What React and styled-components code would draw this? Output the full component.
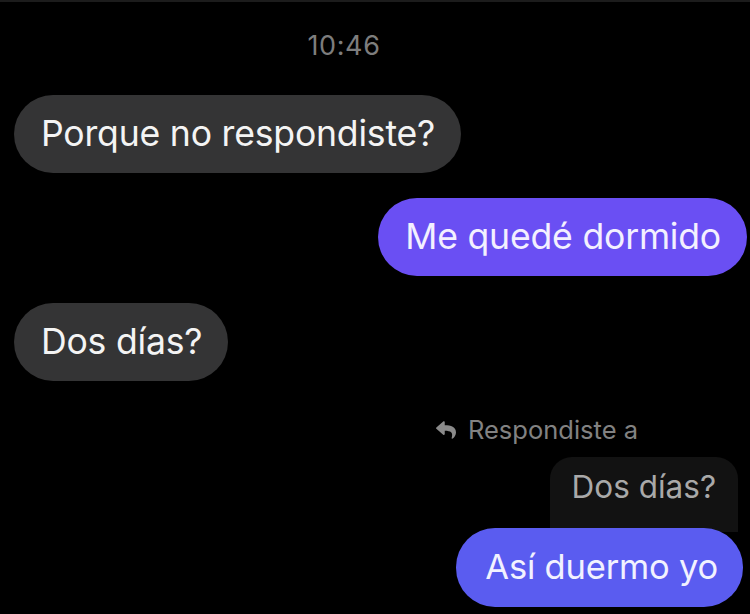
import React from "react";
import styled, { createGlobalStyle, css } from "styled-components";
import { FaReply } from "react-icons/fa";

const Global = createGlobalStyle`
  html, body {
    margin: 0;
    padding: 0;
    background: #000;
  }
  body {
    font-family: Inter, "Noto Sans", "Liberation Sans", sans-serif;
    -webkit-font-smoothing: antialiased;
  }
`;

const Screen = styled.div`
  width: 750px;
  height: 614px;
  background: #000;
  border-top: 2px solid #1c1c1c;
  box-sizing: border-box;
  overflow: hidden;
  display: flex;
  flex-direction: column;
  padding: 0 3px 0 14px;
`;

const TimeRow = styled.div`
  display: flex;
  justify-content: center;
  padding: 28px 73px 0 0;
  height: 63px;
  box-sizing: border-box;
  color: #7d7d7d;
  font-size: 27px;
  letter-spacing: 0.6px;
  line-height: 32px;
`;

const Row = styled.div`
  display: flex;
  justify-content: ${(p) => (p.$mine ? "flex-end" : "flex-start")};
  margin-top: ${(p) => p.$gap || 0}px;
`;

const Bubble = styled.div`
  height: 78px;
  box-sizing: border-box;
  display: flex;
  align-items: center;
  padding: 0 26px 2px 27px;
  border-radius: 39px;
  font-size: 35.6px;
  letter-spacing: -0.2px;
  white-space: nowrap;
  color: #f4f4f4;
  background: #343435;
  ${(p) =>
    p.$tone === "violet" &&
    css`
      background: #6a4ff3;
      color: #f3f0ff;
    `}
  ${(p) =>
    p.$tone === "blue" &&
    css`
      background: #5a5cf0;
      color: #f2f2ff;
    `}
`;

const ReplyGroup = styled.div`
  display: flex;
  flex-direction: column;
  align-items: flex-end;
  margin-top: 34px;
`;

const ReplyLabel = styled.div`
  display: flex;
  align-items: center;
  gap: 10px;
  align-self: flex-end;
  margin-right: 109px;
  color: #828282;
  font-size: 25.5px;
  line-height: 30px;
  svg {
    width: 24px;
    height: 20px;
    color: #8a8a8a;
  }
`;

const Quote = styled.div`
  margin-top: 12px;
  margin-right: 9px;
  height: 75px;
  box-sizing: border-box;
  padding: 12px 22px 0 22px;
  border-radius: 22px 22px 0 0;
  background: #121212;
  color: #a9a9a9;
  font-size: 31.5px;
  line-height: 36px;
  white-space: nowrap;
`;

const ReplyBubble = styled(Bubble)`
  position: relative;
  margin-top: -4px;
  margin-right: 4px;
  height: 79px;
  padding: 0 25px 2px 29px;
  font-size: 34.5px;
`;

export default function App() {
  return (
    <>
      <Global />
      <Screen>
        <TimeRow>10:46</TimeRow>
        <Row $gap={30}>
          <Bubble>Porque no respondiste?</Bubble>
        </Row>
        <Row $mine $gap={25}>
          <Bubble $tone="violet">Me quedé dormido</Bubble>
        </Row>
        <Row $gap={27}>
          <Bubble>Dos días?</Bubble>
        </Row>
        <ReplyGroup>
          <ReplyLabel>
            <FaReply />
            Respondiste a
          </ReplyLabel>
          <Quote>Dos días?</Quote>
          <ReplyBubble $tone="blue">Así duermo yo</ReplyBubble>
        </ReplyGroup>
      </Screen>
    </>
  );
}
